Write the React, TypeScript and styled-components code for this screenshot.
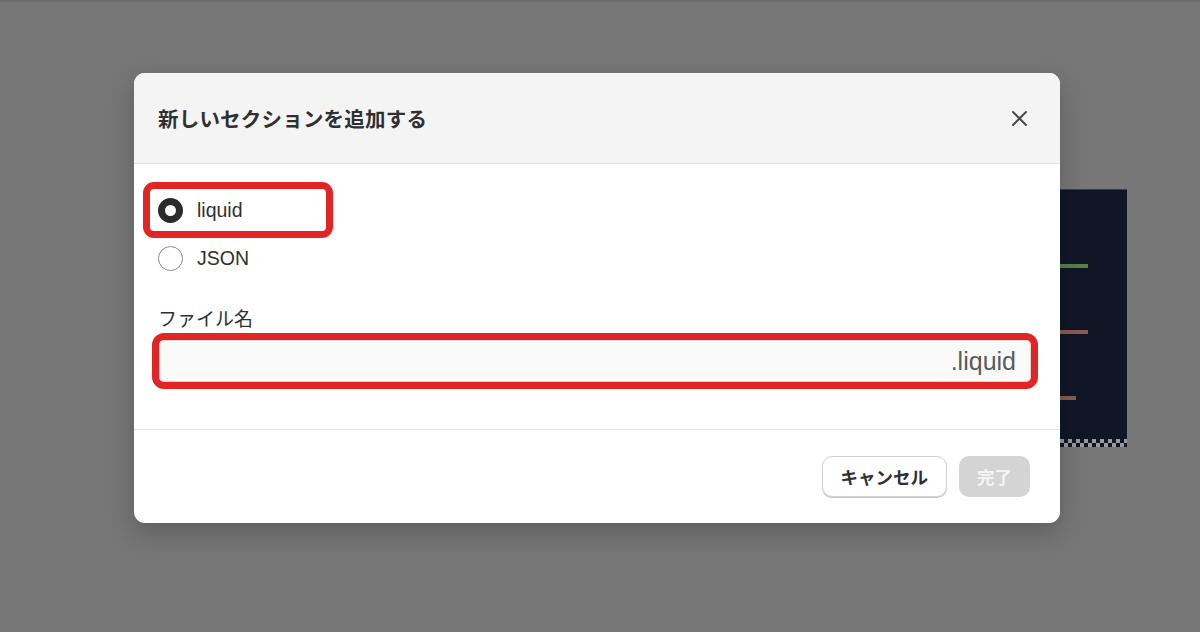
import styled, { createGlobalStyle } from "styled-components";

const GlobalStyle = createGlobalStyle`
  html, body {
    margin: 0;
    padding: 0;
  }
  body {
    background: #777777;
    font-family: "Liberation Sans", "Noto Sans CJK JP", sans-serif;
    color: #303030;
  }
`;

const Page = styled.div`
  position: relative;
  width: 1200px;
  height: 632px;
  overflow: hidden;
  background: #777777;
  border-top: 2px solid #6c6c6c;
  box-sizing: border-box;
`;

// the editor preview that peeks out behind the dialog
const Preview = styled.div`
  position: absolute;
  left: 1000px;
  top: 187px;
  width: 127px;
  height: 258px;
  background: #0f1727;
  border-top: 1px solid #3a3f4a;
  box-sizing: border-box;
`;

const PreviewLine = styled.div<{ $top: number; $width: number; $color: string }>`
  position: absolute;
  left: 0;
  top: ${(p) => p.$top}px;
  width: ${(p) => p.$width}px;
  height: 4px;
  background: ${(p) => p.$color};
`;

const Checker = styled.div`
  position: absolute;
  left: 0;
  right: 0;
  bottom: 0;
  height: 8px;
  background-color: #0f1727;
  background-image: linear-gradient(45deg, #9a9a9a 25%, transparent 25%, transparent 75%, #9a9a9a 75%),
    linear-gradient(45deg, #9a9a9a 25%, transparent 25%, transparent 75%, #9a9a9a 75%);
  background-size: 8px 8px;
  background-position: 0 0, 4px 4px;
`;

const Modal = styled.div`
  position: relative;
  z-index: 1;
  width: 926px;
  margin: 71px 0 0 134px;
  background: #ffffff;
  border-radius: 11px;
  overflow: hidden;
  box-shadow: 0 10px 28px rgba(0, 0, 0, 0.22);
`;

const Header = styled.div`
  height: 90px;
  display: flex;
  align-items: center;
  justify-content: space-between;
  padding: 0 31px 0 24px;
  background: #f4f4f4;
  border-bottom: 1px solid #e3e3e3;
`;

const Title = styled.h2`
  margin: 0;
  font-family: "Noto Sans CJK JP", sans-serif;
  font-size: 20.5px;
  font-weight: 700;
  color: #303030;
  letter-spacing: 0.2px;
`;

const CloseButton = styled.button`
  width: 20px;
  height: 20px;
  padding: 0;
  border: none;
  background: none;
  display: flex;
  align-items: center;
  justify-content: center;
  cursor: pointer;
`;

const Body = styled.div`
  padding: 22px 29px 47px 24px;
  display: flex;
  flex-direction: column;
`;

const RadioRow = styled.label<{ $marked?: boolean }>`
  position: relative;
  height: 48px;
  display: flex;
  align-items: center;
  gap: 14px;
  font-size: 19.5px;
  color: #303030;
  cursor: pointer;

  &::before {
    content: "";
    display: ${(p) => (p.$marked ? "block" : "none")};
    position: absolute;
    left: -15px;
    top: -4px;
    bottom: -4px;
    width: 190px;
    border: 7px solid #e12424;
    border-radius: 11px;
    box-sizing: border-box;
    pointer-events: none;
  }
`;

const RadioDot = styled.span<{ $checked?: boolean }>`
  width: 25px;
  height: 25px;
  border-radius: 50%;
  box-sizing: border-box;
  background: #ffffff;
  border: ${(p) => (p.$checked ? "7.5px solid #2a2a2a" : "1.5px solid #8a8a8a")};
`;

const FieldLabel = styled.div`
  margin-top: 24px;
  font-family: "Noto Sans CJK JP", sans-serif;
  font-size: 19px;
  line-height: 24px;
  color: #303030;
`;

const Field = styled.div`
  position: relative;
  margin: 10px 0 0 1px;
  height: 42px;
  display: flex;
  align-items: center;
  padding: 0 14px 0 10px;
  background: #fafafa;
  border: 1px solid #d6d6d6;
  border-radius: 6px;
  box-sizing: border-box;

  &::after {
    content: "";
    position: absolute;
    inset: -8px;
    border: 7px solid #e12424;
    border-radius: 12px;
    pointer-events: none;
  }
`;

const FieldInput = styled.input`
  flex: 1;
  min-width: 0;
  border: none;
  background: transparent;
  outline: none;
  font-size: 20px;
`;

const Suffix = styled.span`
  font-size: 25px;
  color: #5a5a5a;
`;

const Footer = styled.div`
  height: 93px;
  border-top: 1px solid #e3e3e3;
  display: flex;
  align-items: center;
  justify-content: flex-end;
  gap: 12px;
  padding: 0 30px;
`;

const Button = styled.button<{ $disabled?: boolean }>`
  height: 41px;
  padding: 0 18px;
  border-radius: 10px;
  font-family: "Noto Sans CJK JP", sans-serif;
  font-size: 17.5px;
  font-weight: 700;
  cursor: pointer;
  border: ${(p) => (p.$disabled ? "none" : "1px solid #d2d2d2")};
  background: ${(p) => (p.$disabled ? "#d4d4d4" : "#ffffff")};
  color: ${(p) => (p.$disabled ? "#f4f4f4" : "#303030")};
  box-shadow: ${(p) => (p.$disabled ? "none" : "0 1px 0 #c4c4c4")};
`;

export default function App() {
  return (
    <Page>
      <GlobalStyle />
      <Preview>
        <PreviewLine $top={74} $width={88} $color="#5e7f45" />
        <PreviewLine $top={140} $width={88} $color="#8e5a50" />
        <PreviewLine $top={206} $width={76} $color="#8e5a50" />
        <Checker />
      </Preview>
      <Modal>
        <Header>
          <Title>新しいセクションを追加する</Title>
          <CloseButton aria-label="閉じる">
            <svg width="17" height="17" viewBox="0 0 17 17">
              <path d="M2 2 L15 15 M15 2 L2 15" stroke="#4a4a4a" strokeWidth="2" strokeLinecap="round" />
            </svg>
          </CloseButton>
        </Header>
        <Body>
          <RadioRow $marked>
            <RadioDot $checked />
            liquid
          </RadioRow>
          <RadioRow>
            <RadioDot />
            JSON
          </RadioRow>
          <FieldLabel>ファイル名</FieldLabel>
          <Field>
            <FieldInput />
            <Suffix>.liquid</Suffix>
          </Field>
        </Body>
        <Footer>
          <Button>キャンセル</Button>
          <Button $disabled>完了</Button>
        </Footer>
      </Modal>
    </Page>
  );
}
